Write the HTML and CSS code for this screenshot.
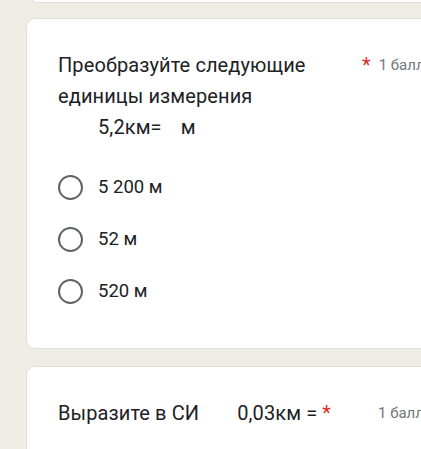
FILE: index.html
```html
<!DOCTYPE html>
<html lang="ru">
<head>
<meta charset="utf-8">
<link rel="stylesheet" href="styles.css">
</head>
<body>
<div class="page">
  <div class="card card-top"></div>
  <div class="card q">
    <div class="head">
      <div class="title title-wide">Преобразуйте следующие единицы измерения<span class="indent">5,2км=<span class="gap">м</span></span></div>
      <span class="req req-right">*</span>
      <span class="pts">1 балл</span>
    </div>
    <div class="options">
      <div class="opt"><span class="radio"></span><span class="lbl">5 200 м</span></div>
      <div class="opt"><span class="radio"></span><span class="lbl">52 м</span></div>
      <div class="opt"><span class="radio"></span><span class="lbl">520 м</span></div>
    </div>
  </div>
  <div class="card q q2">
    <div class="head">
      <div class="title">Выразите в СИ<span class="gap2">0,03км =</span> <span class="req">*</span></div>
      <span class="pts pts-auto">1 балл</span>
    </div>
  </div>
</div>
</body>
</html>
```
FILE: styles.css
```css
html, body {
  margin: 0;
  padding: 0;
  overflow: hidden;
  height: 449px;
}
body {
  background: #efebe5;
  font-family: Roboto, "Noto Sans", sans-serif;
  color: #202124;
}
.page {
  display: flex;
  flex-direction: column;
  padding-left: 26px;
}
.card {
  background: #ffffff;
  border: 1px solid #e2dfdb;
  border-radius: 9px;
  width: 440px;
  box-sizing: border-box;
}
.card-top {
  height: 4px;
  margin-top: -1px;
  margin-left: 6px;
  border-top: none;
  border-radius: 0 0 0 9px;
}
.q {
  margin-top: 15px;
  padding: 31px 0 0 31px;
  height: 331px;
}
.q2 {
  margin-top: 17px;
  height: 200px;
}
.head {
  display: flex;
  align-items: flex-start;
}
.title {
  font-size: 20px;
  line-height: 31px;
  letter-spacing: 0.1px;
}
.title-wide {
  width: 280px;
}
.indent {
  display: block;
  padding-left: 40px;
}
.gap {
  margin-left: 19px;
}
.gap2 {
  margin-left: 38px;
}
.req {
  color: #d93025;
  font-size: 20px;
}
.req-right {
  margin-left: 24px;
  line-height: 31px;
}
.pts {
  font-size: 15px;
  color: #70757a;
  line-height: 31px;
  margin-left: 8px;
  white-space: nowrap;
}
.pts-auto {
  margin-left: 47px;
}
.options {
  margin-top: 18px;
  display: flex;
  flex-direction: column;
}
.opt {
  display: flex;
  align-items: center;
  height: 52px;
}
.radio {
  width: 25px;
  height: 25px;
  box-sizing: border-box;
  border: 2.5px solid #5f6368;
  border-radius: 50%;
  flex: none;
}
.lbl {
  margin-left: 15px;
  font-size: 18.5px;
}
```
